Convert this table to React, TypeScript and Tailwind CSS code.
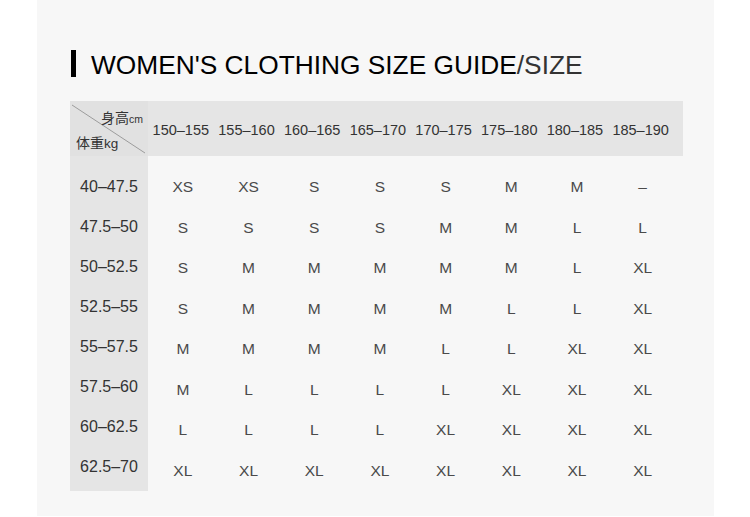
const heights = ["150–155", "155–160", "160–165", "165–170", "170–175", "175–180", "180–185", "185–190"]

const rows: { weight: string; sizes: string[] }[] = [
  { weight: "40–47.5", sizes: ["XS", "XS", "S", "S", "S", "M", "M", "–"] },
  { weight: "47.5–50", sizes: ["S", "S", "S", "S", "M", "M", "L", "L"] },
  { weight: "50–52.5", sizes: ["S", "M", "M", "M", "M", "M", "L", "XL"] },
  { weight: "52.5–55", sizes: ["S", "M", "M", "M", "M", "L", "L", "XL"] },
  { weight: "55–57.5", sizes: ["M", "M", "M", "M", "L", "L", "XL", "XL"] },
  { weight: "57.5–60", sizes: ["M", "L", "L", "L", "L", "XL", "XL", "XL"] },
  { weight: "60–62.5", sizes: ["L", "L", "L", "L", "XL", "XL", "XL", "XL"] },
  { weight: "62.5–70", sizes: ["XL", "XL", "XL", "XL", "XL", "XL", "XL", "XL"] },
]

const CornerCell = () => (
  <div className="relative h-[55px] w-[78px] bg-[#e1e1e1]">
    <svg className="absolute inset-0" width="78" height="55" viewBox="0 0 78 55">
      <line x1="2" y1="4" x2="75" y2="52" stroke="#8a8a8a" strokeWidth="0.8" />
    </svg>
    <div className="absolute right-[5px] top-[10px] flex items-baseline text-[#333]">
      <span className="text-[14px] leading-none">身高</span>
      <span className="text-[10.5px] leading-none">cm</span>
    </div>
    <div className="absolute left-[6px] top-[35px] flex items-baseline text-[#333]">
      <span className="text-[14px] leading-none">体重</span>
      <span className="text-[13.5px] leading-none">kg</span>
    </div>
  </div>
)

export default function App() {
  return (
    <div className="h-[517px] w-[750px] bg-white font-['Liberation_Sans','Noto_Sans_CJK_SC',sans-serif]">
      <div className="ml-[37px] h-[516px] w-[677px] bg-[#f7f7f7] pt-[47px]">
        <div className="ml-[34px] flex items-center">
          <div className="h-[27px] w-[5px] bg-black" />
          <h1 className="ml-[15px] mt-[5px] text-[26.3px] leading-[27px] text-black">
            WOMEN'S CLOTHING SIZE GUIDE<span className="text-[#333]">/SIZE</span>
          </h1>
        </div>

        <div className="ml-[33px] mt-[22px] w-[613px]">
          <div className="flex h-[55px] w-[613px] bg-[#e5e5e5]">
            <CornerCell />
            <div className="grid grid-cols-[repeat(8,65.7px)]">
              {heights.map((h) => (
                <div key={h} className="flex h-[55px] items-center justify-center pt-[4px] text-[14.5px] text-[#333]">
                  {h}
                </div>
              ))}
            </div>
          </div>

          <div className="flex">
            <div className="w-[78px] bg-[#e5e5e5] pt-[11px] pb-[4px]">
              {rows.map((r) => (
                <div key={r.weight} className="flex h-[40px] items-center justify-center text-[16px] text-[#333]">
                  {r.weight}
                </div>
              ))}
            </div>
            <div className="grid grid-cols-[repeat(8,65.7px)] pt-[11px]">
              {rows.map((r) =>
                r.sizes.map((s, i) => (
                  <div
                    key={r.weight + i}
                    className="flex h-[40px] items-center justify-center pl-[4px] text-[15.5px] text-[#4a4a4a]"
                  >
                    {s}
                  </div>
                ))
              )}
            </div>
          </div>
        </div>
      </div>
    </div>
  )
}
